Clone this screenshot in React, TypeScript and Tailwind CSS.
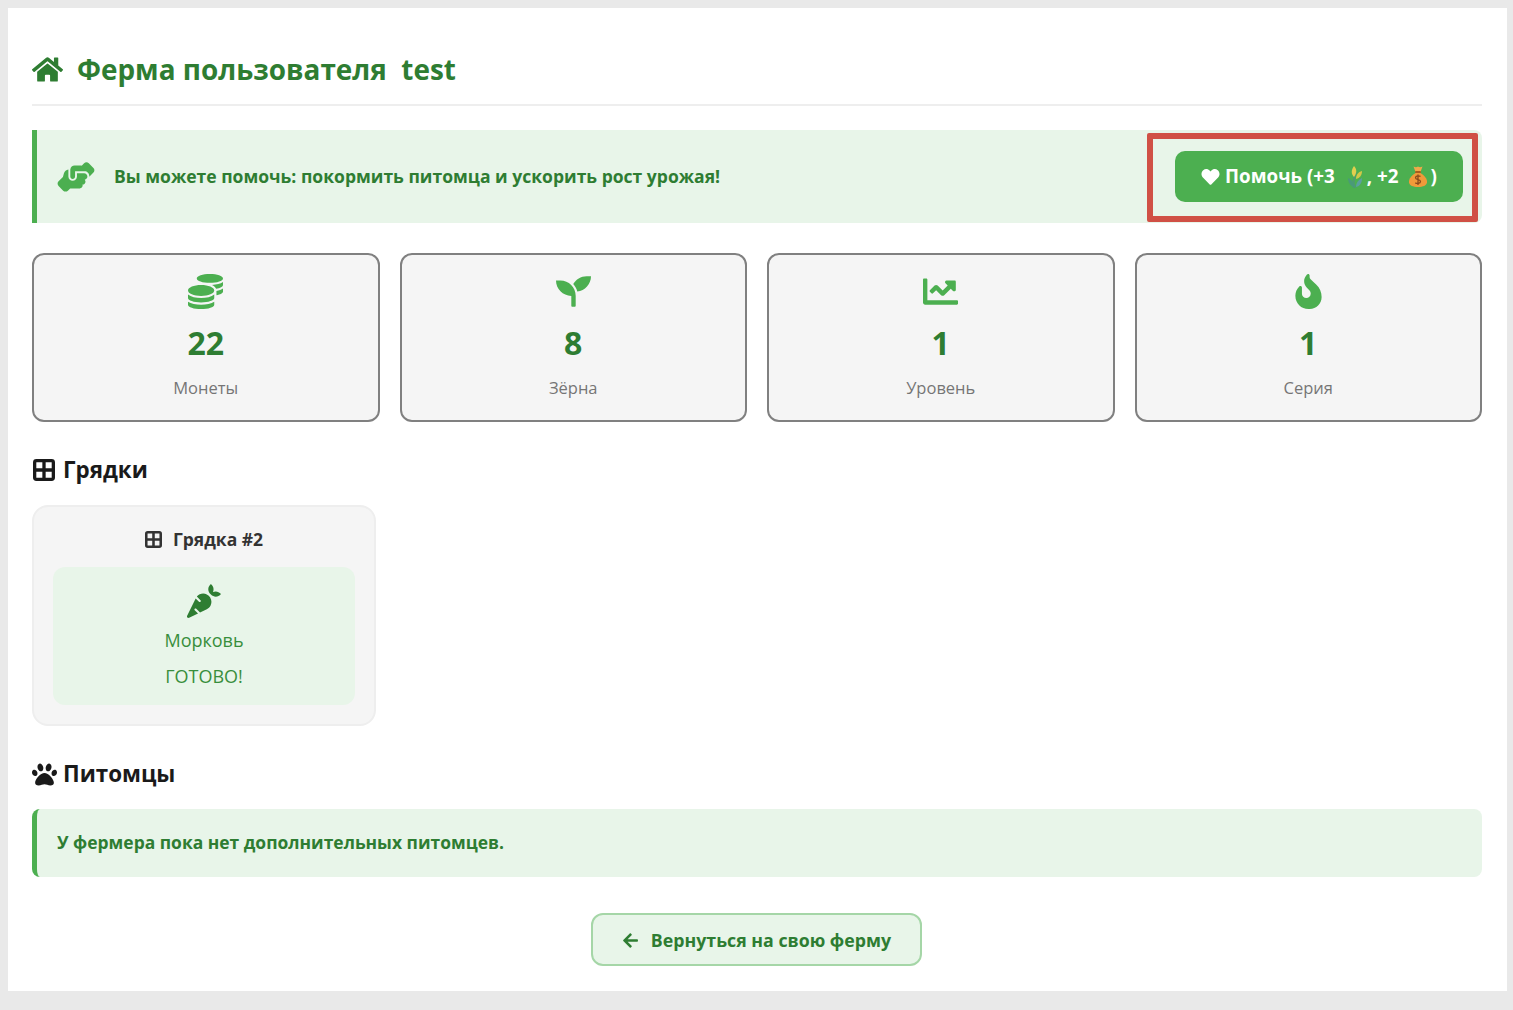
import type { ReactNode } from "react";
import { FaArrowLeft, FaCarrot, FaChartLine, FaCoins, FaHeart, FaHome, FaPaw, FaSeedling } from "react-icons/fa";
import { FaFireFlameCurved, FaHandshakeAngle } from "react-icons/fa6";
import type { IconType } from "react-icons";

const STATS: { icon: IconType; value: string; label: string }[] = [
  { icon: FaCoins, value: "22", label: "Монеты" },
  { icon: FaSeedling, value: "8", label: "Зёрна" },
  { icon: FaChartLine, value: "1", label: "Уровень" },
  { icon: FaFireFlameCurved, value: "1", label: "Серия" },
];

/** Rounded square split in four; the icon sets' versions come out too wide or too thin. */
function GridIcon({ className }: { className: string }) {
  return (
    <svg viewBox="0 0 24 24" className={className} fill="none" stroke="currentColor" strokeWidth="3.6">
      <rect x="1.800" y="1.800" width="20.400" height="20.400" rx="2" />
      <path d="M12 2v20M2 12h20" />
    </svg>
  );
}

/** Sheaf of grain, stands in for the emoji on the help button. */
function SheafEmoji() {
  return (
    <svg viewBox="0 0 16 22" className="mr-[4px] ml-[12px] inline-block h-[22px] w-[16px]">
      <path d="M7 22C6 16 7 11 9 6" stroke="#4f9a70" strokeWidth="2" fill="none" />
      <path d="M9 22C8 17 5 14 1 12c0 5 3 9 8 10z" fill="#4a9a78" />
      <path d="M9 21c0-4 2-7 6-9 0 5-2 8-6 9z" fill="#5c9fa0" />
      <path d="M7 11C4 8 4 4 7 0c3 3 3 7 0 11z" fill="#e2cf4e" />
      <path d="M9 13c0-4 2-7 6-8 0 4-2 7-6 8z" fill="#d2c748" />
    </svg>
  );
}

/** Money bag, stands in for the emoji on the help button. */
function BagEmoji() {
  return (
    <svg viewBox="0 0 20 21" className="mr-[3px] ml-[9px] inline-block h-[21px] w-[20px]">
      <path d="M5.5 0.5c2 1 3 1 4.500 0 1.500 1 2.500 1 4.500 0L12.500 6h-5z" fill="#f0a94a" />
      <rect x="7" y="5" width="6" height="2" rx="1" fill="#a85c1f" />
      <path d="M7.500 7h5c4 2.500 7 6 6.500 9.500-.5 3-4 4.500-9 4.500s-8.500-1.500-9-4.500C.5 13 3.500 9.500 7.500 7z" fill="#f09a3a" />
      <path d="M12.500 10.500c-1-1-5-1-5 1.300 0 2.400 5 1.400 5 3.700 0 2.200-4 2.300-5.200 1.200M10 8.500v10.500" fill="none" stroke="#8a4a1c" strokeWidth="1.300" />
    </svg>
  );
}

function SectionTitle({ icon, children }: { icon: ReactNode; children: string }) {
  return (
    <h2 className="flex h-[32px] items-center text-[22.4px] font-bold text-[#1a1a1a]">
      <span className="flex w-[31px] shrink-0">{icon}</span>
      {children}
    </h2>
  );
}

export default function App() {
  return (
    <div className="min-h-[1010px] bg-[#e9e9e9] pt-[8px] pr-[6px] pb-[19px] pl-[8px] font-['Open_Sans',sans-serif]">
      <main className="h-[983px] bg-white pr-[25px] pl-[24px]">
        <header className="flex h-[98px] items-end border-b-2 border-[#eeeeee] pb-[16px] text-[#2e7d32]">
          <h1 className="flex items-center text-[27.9px] leading-[38px] font-bold whitespace-pre">
            <FaHome className="mr-[14px] h-[31px] w-[31px]" />
            Ферма пользователя  test
          </h1>
        </header>

        <section className="relative mt-[24px] flex h-[93px] items-center justify-between rounded-r-[8px] border-l-[5px] border-[#4caf50] bg-[#e8f5e9] pr-[19px] pl-[20px]">
          <div className="flex items-center gap-[19px] text-[17.55px] font-bold text-[#2e7d32]">
            <FaHandshakeAngle className="h-[38px] w-[38px] text-[#4caf50]" />
            Вы можете помочь: покормить питомца и ускорить рост урожая!
          </div>
          <button className="flex h-[51px] w-[288px] items-center justify-center rounded-[10px] bg-[#4caf50] text-[18.8px] font-bold text-white">
            <FaHeart className="mr-[5px] h-[18px] w-[19px]" />
            Помочь (+3
            <SheafEmoji />, +2
            <BagEmoji />)
          </button>
          <div className="absolute top-[3px] right-[4px] h-[89px] w-[331px] rounded-[2px] border-[6px] border-[#d05045]" />
        </section>

        <section className="mt-[30px] grid grid-cols-4 gap-[20px]">
          {STATS.map(({ icon: Icon, value, label }) => (
            <div key={label} className="flex h-[169px] flex-col items-center rounded-[12px] border-2 border-[#808080] bg-[#f5f5f5] pt-[19px]">
              <Icon className="h-[35px] w-[35px] text-[#4caf50]" />
              <div className="mt-[12px] text-[32px] leading-[44px] font-bold text-[#2e7d32]">{value}</div>
              <div className="mt-[11px] text-[16.5px] leading-[24px] text-[#757575]">{label}</div>
            </div>
          ))}
        </section>

        <section className="mt-[32px]">
          <SectionTitle icon={<GridIcon className="ml-[1px] h-[22px] w-[22px]" />}>Грядки</SectionTitle>
          <div className="mt-[19px] w-[344px] rounded-[16px] border-2 border-[#eeeeee] bg-[#f5f5f5] px-[19px] pt-[20px] pb-[19px]">
            <div className="flex h-[24px] items-center justify-center gap-[11px] text-[17.5px] font-bold text-[#333333]">
              <GridIcon className="h-[17px] w-[17px]" />
              Грядка #2
            </div>
            <div className="mt-[16px] flex h-[138px] flex-col items-center rounded-[12px] bg-[#e8f5e9] pt-[17px] text-[18px] text-[#388e3c]">
              <FaCarrot className="h-[34px] w-[34px] text-[#2e7d32]" />
              <div className="mt-[4px] leading-[36px]">Морковь</div>
              <div className="leading-[36px]">ГОТОВО!</div>
            </div>
          </div>
        </section>

        <section className="mt-[32px]">
          <SectionTitle icon={<FaPaw className="h-[25px] w-[25px]" />}>Питомцы</SectionTitle>
          <div className="mt-[19px] flex h-[68px] items-center rounded-[8px] border-l-[5px] border-[#4caf50] bg-[#e8f5e9] pb-[2px] pl-[20px] text-[17.45px] font-bold text-[#2e7d32]">
            У фермера пока нет дополнительных питомцев.
          </div>
        </section>

        <div className="mt-[36px] flex justify-center">
          <button className="mr-[1px] flex h-[53px] w-[331px] items-center justify-center gap-[12px] rounded-[12px] border-2 border-[#a5d6a7] bg-[#e8f5e9] pt-[1px] text-[17.75px] font-bold text-[#2e7d32]">
            <FaArrowLeft className="h-[17px] w-[17px]" />
            Вернуться на свою ферму
          </button>
        </div>
      </main>
    </div>
  );
}
